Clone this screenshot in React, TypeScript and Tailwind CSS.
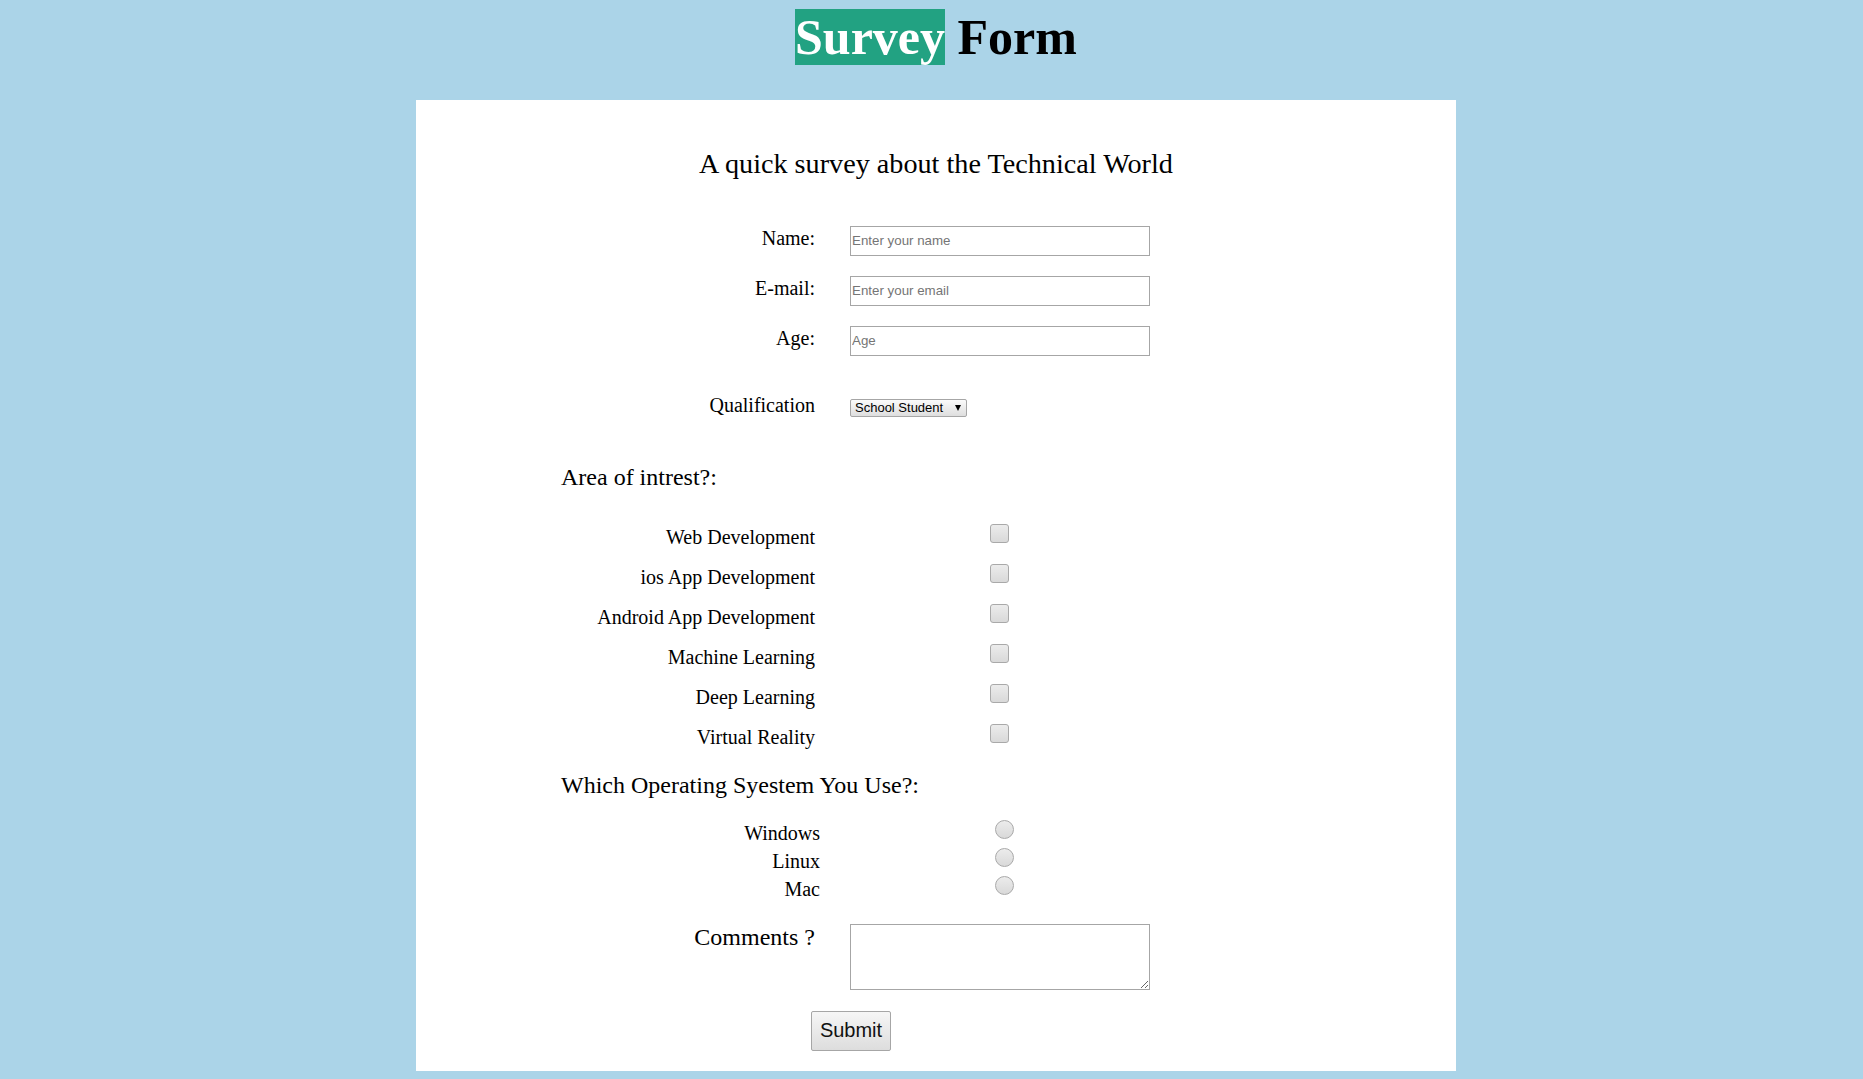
import React from 'react';

const interests = [
  'Web Development',
  'ios App Development',
  'Android App Development',
  'Machine Learning',
  'Deep Learning',
  'Virtual Reality',
];

const systems = ['Windows', 'Linux', 'Mac'];

const serif = { fontFamily: '"Liberation Serif", "Times New Roman", serif' };

const TextRow: React.FC<{ label: string; placeholder: string; type?: string }> = ({
  label,
  placeholder,
  type = 'text',
}) => (
  <div className="flex items-start">
    <label className="w-[399px] text-right text-[20px] leading-[24px] text-black">{label}</label>
    <input
      type={type}
      placeholder={placeholder}
      className="ml-[35px] h-[30px] w-[300px] border border-[#a6a6a6] bg-white pl-[1px] pb-[1px] font-['Liberation_Sans',Arial,sans-serif] text-[13.333px] text-black outline-none placeholder:text-[#757575]"
    />
  </div>
);

export default function App() {
  return (
    <div className="min-h-screen bg-[#abd4e8] pb-[8px]" style={serif}>
      <div className="ml-[416px] w-[1040px]">
        <h1 className="pt-[9px] text-center text-[50px] font-bold leading-[56px] text-black">
          <span className="bg-[#22a282] text-white">Survey</span> Form
        </h1>

        <form className="mt-[35px] bg-white pt-[48px] pb-[20px]" onSubmit={(e) => e.preventDefault()}>
          <h2 className="text-center text-[28.2px] font-normal leading-[32px] text-black">
            A quick survey about the Technical World
          </h2>

          <div className="mt-[46px] flex flex-col gap-[20px]">
            <TextRow label="Name:" placeholder="Enter your name" />
            <TextRow label="E-mail:" placeholder="Enter your email" type="email" />
            <TextRow label="Age:" placeholder="Age" />
          </div>

          <div className="mt-[37px] flex items-start">
            <label className="w-[399px] text-right text-[20px] leading-[24px] text-black">Qualification</label>
            <div className="relative ml-[35px] mt-[6px] h-[18px] w-[117px] rounded-[2px] border border-[#a6a6a6] bg-gradient-to-b from-[#fbfbfb] to-[#dedede]">
              <span className="absolute left-[4px] top-0 font-['Liberation_Sans',Arial,sans-serif] text-[13px] leading-[16px] text-black">
                School Student
              </span>
              <svg className="absolute right-[5px] top-[5px]" width="6" height="6" viewBox="0 0 6 6">
                <path d="M0 0 H6 L3 6 Z" fill="#000" />
              </svg>
            </div>
          </div>

          <h3 className="mt-[46px] pl-[145px] text-[24px] font-normal leading-[28px] text-black">Area of intrest?:</h3>

          <div className="mt-[33px] flex flex-col gap-[14px]">
            {interests.map((item) => (
              <div key={item} className="flex h-[26px] items-start">
                <label className="w-[399px] pt-[1px] text-right text-[20px] leading-[24px] text-black">{item}</label>
                <input
                  type="checkbox"
                  className="ml-[175px] h-[19px] w-[19px] appearance-none rounded-[3px] border border-[#a9a9a9] bg-gradient-to-b from-[#ececec] to-[#d9d9d9]"
                />
              </div>
            ))}
          </div>

          <h3 className="mt-[21px] pl-[145px] text-[24px] font-normal leading-[28px] text-black">
            Which Operating Syestem You Use?:
          </h3>

          <div className="mt-[21px] flex flex-col">
            {systems.map((os) => (
              <div key={os} className="flex h-[28px] items-start">
                <label className="w-[404px] pt-[1px] text-right text-[20px] leading-[24px] text-black">{os}</label>
                <input
                  type="radio"
                  name="os"
                  className="ml-[175px] h-[19px] w-[19px] appearance-none rounded-full border border-[#a9a9a9] bg-gradient-to-b from-[#ececec] to-[#d9d9d9]"
                />
              </div>
            ))}
          </div>

          <div className="mt-[19px] flex items-start">
            <label className="w-[399px] text-right text-[24px] leading-[28px] text-black">Comments ?</label>
            <textarea className="ml-[35px] mt-[1px] h-[66px] w-[300px] border border-[#a6a6a6] bg-white outline-none" />
          </div>

          <button
            type="submit"
            className="ml-[395px] mt-[21px] block h-[40px] w-[80px] rounded-[2px] border border-[#a6a6a6] bg-gradient-to-b from-[#f6f6f6] to-[#dddddd] pb-[2px] font-['Liberation_Sans',Arial,sans-serif] text-[20px] leading-[22px] text-[#111]"
          >
            Submit
          </button>
        </form>
      </div>
    </div>
  );
}
